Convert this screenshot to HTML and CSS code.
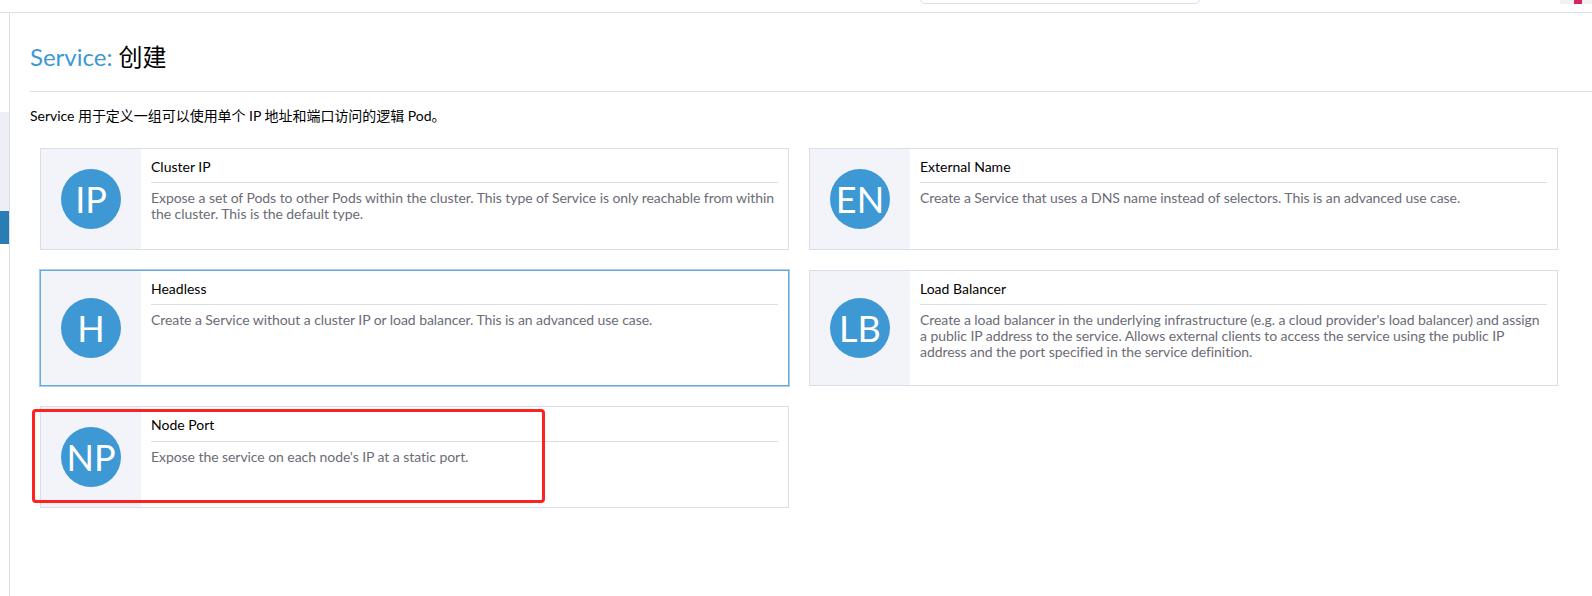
FILE: index.html
```html
<!DOCTYPE html>
<html lang="en">
<head>
    <meta charset="UTF-8">
    <meta name="viewport" content="width=device-width, initial-scale=1.0">
    <title>Service - Create</title>
    <link rel="stylesheet" href="styles.css">
</head>
<body>
    <div class="topbar">
        <div class="search-box"></div>
        <div class="user-chip"><span class="user-mark"></span></div>
    </div>
    <div class="layout">
        <div class="sidebar">
            <div class="side-group"></div>
            <div class="side-active"></div>
        </div>
        <div class="main">
            <h1 class="page-title"><span class="resource">Service:</span> 创建</h1>
            <p class="page-desc">Service 用于定义一组可以使用单个 IP 地址和端口访问的逻辑 Pod。</p>
            <div class="card-grid">
                <div class="card">
                    <div class="card-side"><div class="badge">IP</div></div>
                    <div class="card-body">
                        <div class="card-title">Cluster IP</div>
                        <div class="card-text">Expose a set of Pods to other Pods within the cluster. This type of Service is only reachable from within the cluster. This is the default type.</div>
                    </div>
                </div>
                <div class="card">
                    <div class="card-side"><div class="badge">EN</div></div>
                    <div class="card-body">
                        <div class="card-title">External Name</div>
                        <div class="card-text">Create a Service that uses a DNS name instead of selectors. This is an advanced use case.</div>
                    </div>
                </div>
                <div class="card card-hover">
                    <div class="card-side"><div class="badge">H</div></div>
                    <div class="card-body">
                        <div class="card-title">Headless</div>
                        <div class="card-text">Create a Service without a cluster IP or load balancer. This is an advanced use case.</div>
                    </div>
                </div>
                <div class="card">
                    <div class="card-side"><div class="badge">LB</div></div>
                    <div class="card-body">
                        <div class="card-title">Load Balancer</div>
                        <div class="card-text">Create a load balancer in the underlying infrastructure (e.g. a cloud provider's load balancer) and assign a public IP address to the service. Allows external clients to access the service using the public IP address and the port specified in the service definition.</div>
                    </div>
                </div>
                <div class="card card-last">
                    <div class="card-side"><div class="badge">NP</div></div>
                    <div class="card-body">
                        <div class="card-title">Node Port</div>
                        <div class="card-text">Expose the service on each node's IP at a static port.</div>
                    </div>
                    <div class="red-mark"></div>
                </div>
            </div>
        </div>
    </div>
</body>
</html>
```

FILE: styles.css
```css
* {
    box-sizing: border-box;
}
html, body {
    height: 100%;
}
body {
    margin: 0;
    background-color: #fff;
    color: #000;
    font-family: 'Lato', 'Noto Sans CJK SC', sans-serif;
    font-size: 14px;
    overflow: hidden;
}
.topbar {
    display: flex;
    justify-content: flex-end;
    align-items: flex-start;
    height: 13px;
    border-bottom: 1px solid #dcdee7;
}
.search-box {
    width: 280px;
    height: 5px;
    margin-right: 360px;
    margin-top: -1px;
    border: 1px solid #dcdee7;
    border-radius: 0 0 5px 5px;
}
.user-chip {
    width: 32px;
    height: 4px;
    padding-left: 14px;
    background-color: #f1f1f1;
}
.user-mark {
    display: block;
    width: 8px;
    height: 4px;
    background-color: #d6245f;
}
.layout {
    display: flex;
    height: calc(100% - 13px);
}
.sidebar {
    flex: 0 0 10px;
    padding-top: 99px;
    border-right: 1px solid #dcdee7;
}
.side-group {
    height: 99px;
    background-color: #eeeff4;
}
.side-active {
    height: 33px;
    background-color: #2a7cb4;
}
.main {
    flex: 1;
    padding: 0 0 0 20px;
}
.page-title {
    margin: 0;
    height: 79px;
    padding-top: 28px;
    border-bottom: 1px solid #dcdee7;
    font-size: 24px;
    font-weight: 400;
    line-height: 32px;
}
.resource {
    color: #3d98d3;
}
.page-desc {
    margin: 0;
    padding-top: 15px;
    line-height: 17px;
    font-size: 14px;
    letter-spacing: -0.03px;
}
.card-grid {
    display: grid;
    grid-template-columns: 749px 749px;
    gap: 20px;
    margin: 24px 0 0 10px;
}
.card {
    position: relative;
    display: flex;
    min-height: 102px;
    border: 1px solid #dcdee7;
}
.card-hover {
    border-color: #6aaad9;
    box-shadow: 0 0 0 1px #a9cde8;
}
.card-side {
    flex: 0 0 100px;
    display: flex;
    align-items: center;
    justify-content: center;
    background-color: #f3f4f9;
}
.badge {
    width: 60px;
    height: 60px;
    border-radius: 50%;
    background-color: #3d98d3;
    color: #fff;
    font-size: 36px;
    line-height: 60px;
    text-align: center;
}
.card-body {
    flex: 1;
    padding: 9px 10px 25px 10px;
}
.card-title {
    height: 25px;
    line-height: 18px;
    border-bottom: 1px solid #dcdee7;
    margin-bottom: 7px;
}
.card-last .card-title {
    height: 26px;
}
.card-text {
    color: #6c6c76;
    line-height: 16px;
    letter-spacing: -0.06px;
}
.red-mark {
    position: absolute;
    left: -9px;
    top: 2px;
    width: 513px;
    height: 94px;
    border: 3px solid #ff2020;
    border-radius: 4px;
}
```
